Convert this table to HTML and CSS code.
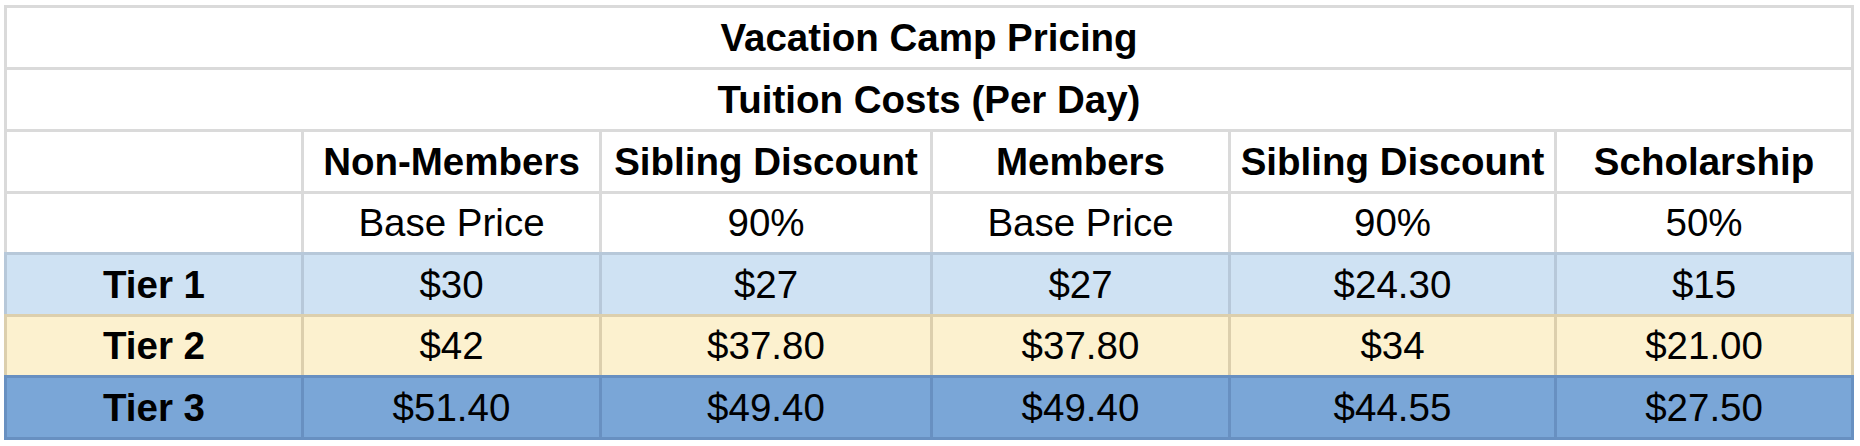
FILE: index.html
```html
<!DOCTYPE html>
<html lang="en">
<head>
<meta charset="utf-8">
<title>Vacation Camp Pricing</title>
<link rel="stylesheet" href="styles.css">
</head>
<body>
<table class="sheet">
  <colgroup>
    <col class="c-label">
    <col class="c-a">
    <col class="c-b">
    <col class="c-a">
    <col class="c-d">
    <col class="c-e">
  </colgroup>
  <tbody>
    <tr class="r-title">
      <td class="bold last" colspan="6">Vacation Camp Pricing</td>
    </tr>
    <tr class="r-title">
      <td class="bold last" colspan="6">Tuition Costs (Per Day)</td>
    </tr>
    <tr class="r-head">
      <td></td>
      <td class="bold">Non-Members</td>
      <td class="bold">Sibling Discount</td>
      <td class="bold">Members</td>
      <td class="bold">Sibling Discount</td>
      <td class="bold last">Scholarship</td>
    </tr>
    <tr class="r-sub">
      <td></td>
      <td>Base Price</td>
      <td>90%</td>
      <td>Base Price</td>
      <td>90%</td>
      <td class="last">50%</td>
    </tr>
    <tr class="r-tier tier1">
      <td class="bold">Tier 1</td>
      <td>$30</td>
      <td>$27</td>
      <td>$27</td>
      <td>$24.30</td>
      <td class="last">$15</td>
    </tr>
    <tr class="r-tier tier2">
      <td class="bold">Tier 2</td>
      <td>$42</td>
      <td>$37.80</td>
      <td>$37.80</td>
      <td>$34</td>
      <td class="last">$21.00</td>
    </tr>
    <tr class="r-tier tier3 r-end">
      <td class="bold">Tier 3</td>
      <td>$51.40</td>
      <td>$49.40</td>
      <td>$49.40</td>
      <td>$44.55</td>
      <td class="last">$27.50</td>
    </tr>
  </tbody>
</table>
</body>
</html>
```

FILE: styles.css
```css
html, body {
  margin: 0;
  padding: 0;
  background: #ffffff;
}

body {
  padding: 5px 0 0 4px;
  font-family: "Liberation Sans", Arial, sans-serif;
  color: #000000;
}

.sheet {
  border-collapse: separate;
  border-spacing: 0;
  table-layout: fixed;
  width: 1850px;
}

.c-label { width: 297px; }
.c-a { width: 298px; }
.c-b { width: 331px; }
.c-d { width: 326px; }
.c-e { width: 300px; }

.sheet td {
  box-sizing: border-box;
  padding: 0 4px;
  border-top: 3px solid #dadada;
  border-left: 3px solid #dadada;
  text-align: center;
  vertical-align: middle;
  font-size: 38.5px;
  line-height: 44px;
  white-space: nowrap;
  overflow: hidden;
  height: 62px;
}

.sheet td.last {
  border-right: 3px solid #dadada;
}

.sheet td.bold {
  font-weight: 700;
}

.r-sub td { height: 61px; }

.tier1 td {
  background: #cfe2f3;
  border-top-color: #b7c8d9;
  border-left-color: #b7c8d9;
}
.tier1 td.last { border-right-color: #b7c8d9; }

.tier2 td {
  background: #fcf1cf;
  border-top-color: #dccfad;
  border-left-color: #dccfad;
  height: 61px;
}
.tier2 td.last { border-right-color: #dccfad; }

.tier3 td {
  background: #7aa6d7;
  border-top-color: #6890c1;
  border-left-color: #6890c1;
  border-bottom: 3px solid #6890c1;
  height: 65px;
}
.tier3 td.last { border-right-color: #6890c1; }
```
